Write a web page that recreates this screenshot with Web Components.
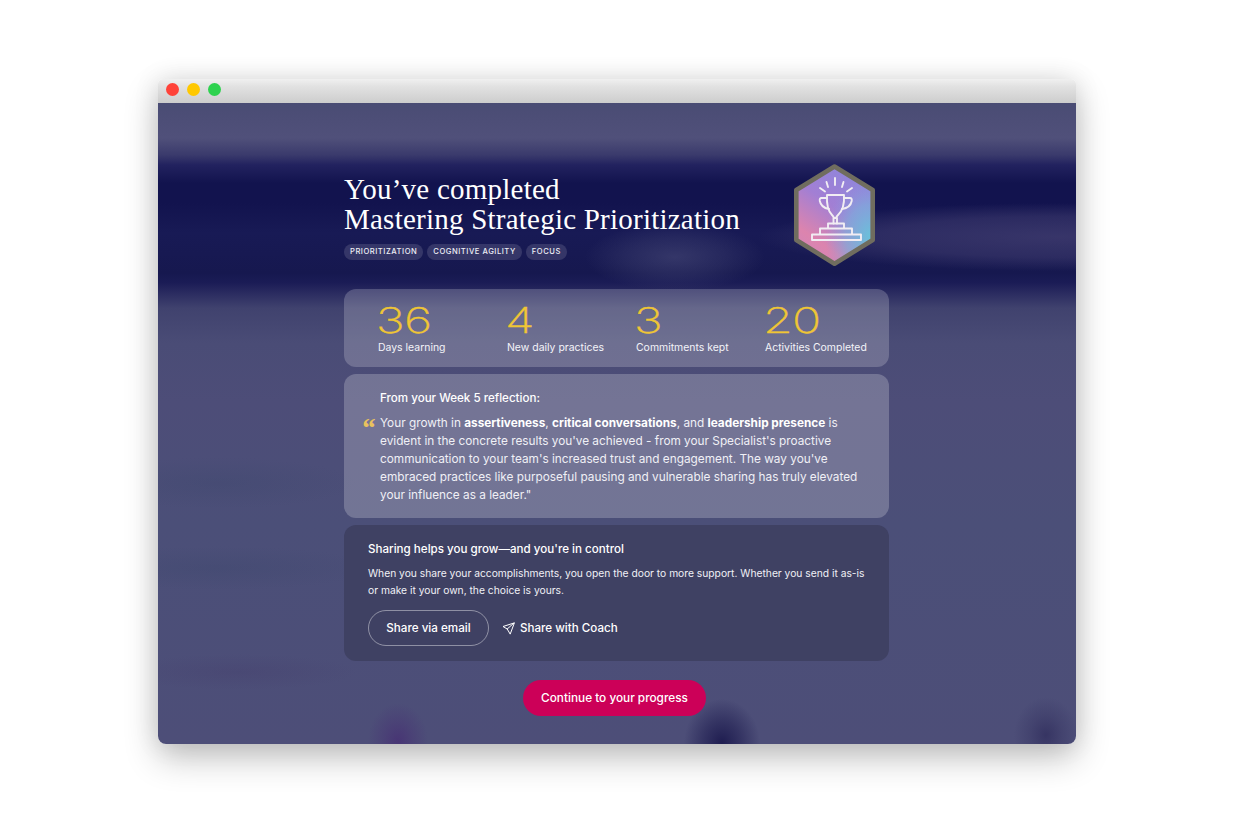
<!DOCTYPE html>
<html lang="en"><head><meta charset="utf-8"><title>Course complete</title>
<style>
html,body{margin:0;background:#fff;}
body{width:1234px;height:820px;overflow:hidden;font-family:Inter,"Liberation Sans",sans-serif;}
</style></head><body>
<mac-window>
  <completion-header>
    <tag-chip>PRIORITIZATION</tag-chip><tag-chip>COGNITIVE AGILITY</tag-chip><tag-chip>FOCUS</tag-chip>
  </completion-header>
  <stats-card>
    <stat-item value="36">Days learning</stat-item>
    <stat-item value="4">New daily practices</stat-item>
    <stat-item value="3">Commitments kept</stat-item>
    <stat-item value="20">Activities Completed</stat-item>
  </stats-card>
  <reflection-card heading="From your Week 5 reflection:">Your growth in <b>assertiveness</b>, <b>critical conversations</b>, and <b>leadership presence</b> is evident in the concrete results you've achieved - from your Specialist's proactive communication to your team's increased trust and engagement. The way you've embraced practices like purposeful pausing and vulnerable sharing has truly elevated your influence as a leader."</reflection-card>
  <share-card></share-card>
  <continue-button>Continue to your progress</continue-button>
</mac-window>
<script>
function def(name, css, html, setup){
  customElements.define(name, class extends HTMLElement{
    constructor(){super();this.attachShadow({mode:'open'}).innerHTML='<style>'+css+'</style>'+html;}
    connectedCallback(){ if(setup) setup(this); }
  });
}
def('mac-window',`
:host{display:block;position:absolute;left:158px;top:79px;width:918px;height:665px;border-radius:5px 5px 8px 8px;box-shadow:0 14px 34px rgba(0,0,0,.24),0 0 26px rgba(0,0,0,.1);color:#fff}
.bar{height:24px;box-sizing:border-box;display:flex;align-items:center;gap:8px;padding:0 0 3px 8px;background:linear-gradient(#f0f0f0,#e2e2e2 30%,#cdcdcd);border-radius:5px 5px 0 0}
i{width:13px;height:13px;border-radius:50%;display:block}
.view{height:641px;box-sizing:border-box;border-radius:0 0 8px 8px;padding:61px 187px 0 186px;display:flex;flex-direction:column;overflow:hidden;
background:
 radial-gradient(ellipse 30px 38px at 240px 638px,rgba(70,45,115,.75),rgba(70,45,115,.35) 50%,transparent),
 radial-gradient(ellipse 38px 44px at 564px 640px,rgba(28,26,78,.95),rgba(28,26,78,.5) 50%,transparent),
 radial-gradient(ellipse 32px 38px at 888px 632px,rgba(45,42,90,.7),rgba(45,42,90,.3) 50%,transparent),
 radial-gradient(ellipse 90px 34px at 517px 154px,rgba(72,74,120,.6),rgba(72,74,120,.3) 55%,transparent),
 radial-gradient(ellipse 300px 34px at 900px 134px,rgba(66,62,112,.75),rgba(66,62,112,.5) 60%,transparent),
 radial-gradient(ellipse 140px 26px at 60px 380px,rgba(60,70,108,.35),transparent),
 radial-gradient(ellipse 160px 22px at 60px 465px,rgba(60,70,108,.35),transparent),
 radial-gradient(ellipse 120px 18px at 80px 569px,rgba(68,62,108,.35),transparent),
 linear-gradient(#4a4c74 0,#50507a 35px,#3a3a6c 52px,#22225f 62px,#12134e 80px,#12134e 100px,#181a55 130px,#16184f 170px,#1b1c56 180px,#2a2b60 190px,#40426e 205px,#4a4c76 240px,#4d4d78 300px,#4b4f78 420px,#4d4e78 641px)}
`,`<div class="bar"><i style="background:#ff4239"></i><i style="background:#ffc800"></i><i style="background:#2ed24f"></i></div><div class="view"><slot></slot></div>`);

def('completion-header',`
:host{display:flex;justify-content:space-between;align-items:flex-start;height:125px;flex:none;padding-right:13px}
h1{margin:10px 0 0;font:400 29px/30px "Liberation Serif",serif;color:#fff;letter-spacing:.23px}
.tags{display:flex;gap:4px;margin-top:10px}
svg{display:block}
`,`<div><h1>You’ve completed<br>Mastering Strategic Prioritization</h1><div class="tags"><slot></slot></div></div>
<svg width="84" height="104" viewBox="0 0 84 104" fill="none" aria-hidden="true">
<defs>
<linearGradient id="g1" x1="0.7" y1="0" x2="0.2" y2="0.9"><stop offset="0" stop-color="#8e86dc"/><stop offset=".45" stop-color="#a27fd4"/><stop offset=".85" stop-color="#dc84ae"/><stop offset="1" stop-color="#d585b6"/></linearGradient>
<radialGradient id="g2" cx=".98" cy=".72" r=".6"><stop offset="0" stop-color="#68c2da"/><stop offset=".55" stop-color="#7ab0dc" stop-opacity=".65"/><stop offset="1" stop-color="#8d9ae0" stop-opacity="0"/></radialGradient>
</defs>
<path d="M42.500 2.500 80.700 26V76L42.500 99.700 4.300 76V26Z" fill="url(#g1)"/>
<path d="M42.500 2.500 80.700 26V76L42.500 99.700 4.300 76V26Z" fill="url(#g2)"/>
<path d="M42.500 2.500 80.700 26V76L42.500 99.700 4.300 76V26Z" stroke="#706d5f" stroke-width="4.600" stroke-linejoin="round"/>
<g stroke="#f1edf3" stroke-width="1.900" stroke-linecap="round" stroke-linejoin="round">
<path d="M43 14V21M34.500 18 36 23M51.500 18 50 23M28 24 33 27.500M60 24 55 27.500"/>
<path d="M35 31H52C52.500 40 50.500 47 46 51 45 52 44 53 44 54H42C42 53 41 52 40 51 36 47 34.500 40 35 31Z"/>
<path d="M35 34H29.500C28 34 27.500 35 27.800 37 28.500 41 31.500 44 37 45M52 34H58C59.500 34 60 35 59.700 37 59 41 56 44 50 45"/>
<path d="M41.500 54V59.500M45 54V59.500"/>
<path d="M36 59.500H52V64.500H36ZM28 64.500H60V70.500H28ZM20 70.500H69V76H20Z"/>
</g></svg>`);

def('tag-chip',`
:host{display:block;font:500 7.6px/16px Inter,sans-serif;letter-spacing:.53px;padding:0 6px;height:16px;border-radius:8px;background:rgba(255,255,255,.13);color:#eeeef5}
`,`<slot></slot>`);

def('stats-card',`
:host{display:grid;grid-template-columns:repeat(4,129px);height:78px;box-sizing:border-box;padding:16px 0 0 34px;border-radius:12px;background:rgba(255,255,255,.2);flex:none}
`,`<slot></slot>`);

def('stat-item',`
:host{display:block;white-space:nowrap}
.n{font:200 35px/30px Inter,sans-serif;color:#efc635;transform:scaleX(1.38);transform-origin:0 50%;height:30px;letter-spacing:-.5px;-webkit-text-stroke:.3px #efc635;margin-left:-2px}
.l{font:400 10.450px/14px Inter,sans-serif;color:#f3f3f8;margin-top:6px}
`,`<div class="n"></div><div class="l"><slot></slot></div>`,el=>{el.shadowRoot.querySelector('.n').textContent=el.getAttribute('value')});

def('reflection-card',`
:host{display:grid;grid-template-columns:19px 1fr;align-content:start;margin-top:7px;height:144px;box-sizing:border-box;padding:16px 24px 0 17px;border-radius:12px;background:rgba(255,255,255,.22);flex:none}
h2{grid-column:2;margin:0 0 8px;font:500 11.600px/16px Inter,sans-serif;color:#fff}
.q{font:italic 700 28px/18px "Liberation Serif",serif;color:#e9c25e;padding-top:5px;height:13px;overflow:visible}
p{margin:0;font:400 11.800px/18px Inter,sans-serif;color:#f0f0f6}
::slotted(b){font-weight:700;color:#fff}
`,`<h2></h2><div class="q">“</div><p><slot></slot></p>`,el=>{el.shadowRoot.querySelector('h2').textContent=el.getAttribute('heading')});

def('share-card',`
:host{display:block;margin-top:7px;height:136px;box-sizing:border-box;padding:16px 20px 0 24px;border-radius:12px;background:#3f4163;flex:none}
h2{margin:0 0 8px;font:500 11.600px/16px Inter,sans-serif;color:#fff}
p{margin:0;font:400 10.270px/17px Inter,sans-serif;color:#f0f0f6;white-space:nowrap}
.row{display:flex;align-items:center;margin-top:11px;height:36px}
.a{box-sizing:border-box;width:121px;height:36px;border:1px solid rgba(255,255,255,.42);border-radius:18px;display:flex;align-items:center;justify-content:center;font:500 11.650px/16px Inter,sans-serif}
.b{display:flex;align-items:center;gap:5px;margin-left:13px;font:500 11.600px/16px Inter,sans-serif}
svg{display:block}
`,`<h2>Sharing helps you grow—and you're in control</h2>
<p>When you share your accomplishments, you open the door to more support. Whether you send it as-is<br>or make it your own, the choice is yours.</p>
<div class="row"><div class="a">Share via email</div><div class="b"><svg width="13" height="13" viewBox="0 0 13 13" fill="none" stroke="#fff" stroke-width="1" stroke-linejoin="round" stroke-linecap="round"><path d="M12 1 1 4.500 5.200 7 8 11.800ZM12 1 5.200 7"/></svg>Share with Coach</div></div>`);

def('continue-button',`
:host{display:block;align-self:flex-start;margin:19px 0 0 179px;width:183px;height:36px;border-radius:18px;background:#cc0058;color:#fff;text-align:center;font:500 11.800px/36px Inter,sans-serif;flex:none}
`,`<slot></slot>`);
</script>
</body></html>
